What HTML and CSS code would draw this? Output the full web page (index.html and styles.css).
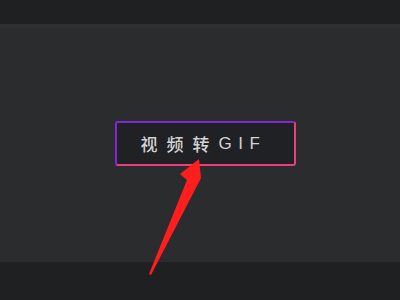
FILE: index.html
```html
<!DOCTYPE html>
<html>
<head>
<meta charset="utf-8">
<link rel="stylesheet" href="styles.css">
</head>
<body>
<div class="page">
  <div class="topbar"></div>
  <div class="divider"></div>
  <main class="stage">
    <button class="gif-btn"><span class="cjk">视频转</span><span class="latin">GIF</span></button>
  </main>
  <div class="bottombar"></div>
  <svg class="annot" width="400" height="300" viewBox="0 0 400 300">
    <path d="M199,159 L201,178 L151,275 L149,274 L187,180 L180,174 Z" fill="#ff1e1e"/>
  </svg>
</div>
</body>
</html>
```

FILE: styles.css
```css
html, body {
  margin: 0;
  padding: 0;
  background: #2b2c2e;
}
.page {
  position: relative;
  width: 400px;
  height: 300px;
  display: flex;
  flex-direction: column;
  overflow: hidden;
}
.topbar {
  height: 24px;
  background: #1f2022;
}
.divider {
  height: 4px;
  background: #2e2f31;
}
.stage {
  flex: 1;
  display: flex;
  align-items: center;
  justify-content: center;
  padding-left: 11px;
  padding-bottom: 3px;
  background: #2b2c2e;
}
.gif-btn {
  width: 181px;
  height: 45px;
  box-sizing: border-box;
  border: 2px solid;
  border-color: #8326d8 #ee3c7c #ee3c7c #8326d8;
  border-radius: 3px;
  background: #202124;
  color: #d4d4d4;
  font-family: "Liberation Sans", "Noto Sans CJK SC", sans-serif;
  font-size: 17px;
  font-weight: 500;
  display: flex;
  align-items: center;
  justify-content: center;
  padding: 0 4px 0 0;
}
.cjk {
  letter-spacing: 9px;
}
.latin {
  letter-spacing: 6.5px;
}
.bottombar {
  height: 38px;
  background: #1f2022;
}
.annot {
  position: absolute;
  left: 0;
  top: 0;
  pointer-events: none;
}
```
